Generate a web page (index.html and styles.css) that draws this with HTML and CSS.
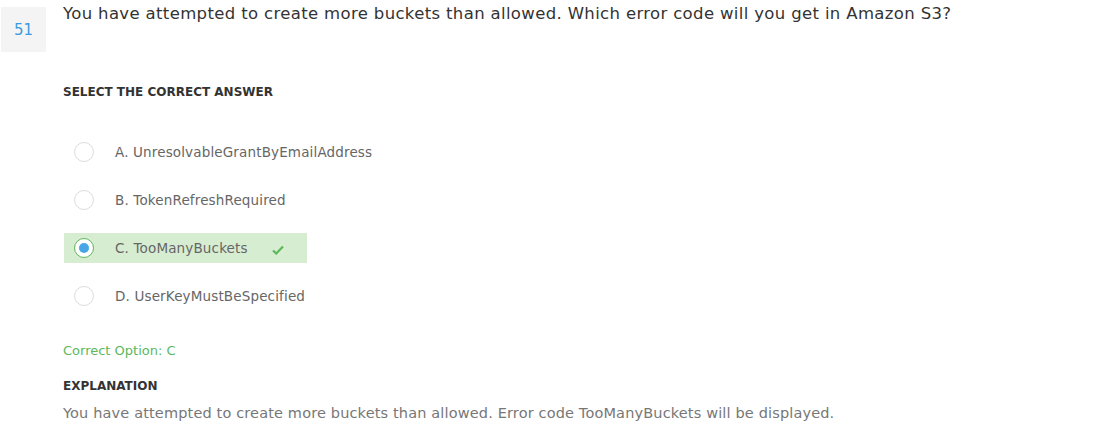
FILE: index.html
```html
<!DOCTYPE html>
<html>
<head>
<meta charset="utf-8">
<link rel="stylesheet" href="styles.css">
</head>
<body>
<div class="question">
  <div class="num">51</div>
  <div class="content">
    <div class="qtext">You have attempted to create more buckets than allowed. Which error code will you get in Amazon S3?</div>
    <div class="label">SELECT THE CORRECT ANSWER</div>
    <ul class="options">
      <li class="option"><span class="radio"></span><span class="otext">A. UnresolvableGrantByEmailAddress</span></li>
      <li class="option"><span class="radio"></span><span class="otext">B. TokenRefreshRequired</span></li>
      <li class="option correct"><span class="radio checked"></span><span class="otext">C. TooManyBuckets</span>
        <svg class="check" width="12" height="10" viewBox="0 0 12 10"><path d="M1 5.5 L4.2 8.5 L11 1.5" fill="none" stroke="#5cb85c" stroke-width="2.2"/></svg>
      </li>
      <li class="option"><span class="radio"></span><span class="otext">D. UserKeyMustBeSpecified</span></li>
    </ul>
    <div class="correct-opt">Correct Option: C</div>
    <div class="label expl-label">EXPLANATION</div>
    <div class="expl">You have attempted to create more buckets than allowed. Error code TooManyBuckets will be displayed.</div>
  </div>
</div>
</body>
</html>
```
FILE: styles.css
```css
* { box-sizing: border-box; }
body {
  margin: 0;
  background: #fff;
  font-family: "DejaVu Sans", sans-serif;
  color: #333;
}
.question {
  display: flex;
  padding: 7px 0 0 1px;
}
.num {
  width: 45px;
  height: 45px;
  background: #f4f4f4;
  color: #3d9be0;
  font-size: 15px;
  display: flex;
  align-items: center;
  justify-content: center;
  flex-shrink: 0;
}
.content {
  margin-left: 17px;
}
.qtext {
  font-size: 16.5px;
  letter-spacing: 0.35px;
  line-height: 20px;
  margin-top: -3px;
  color: #333;
  white-space: nowrap;
}
.label {
  font-size: 12px;
  font-weight: bold;
  color: #333;
  margin-top: 61px;
}
.options {
  list-style: none;
  margin: 38px 0 0 0;
  padding: 0;
}
.option {
  display: flex;
  align-items: center;
  height: 30px;
  width: 243px;
  margin-left: 1px;
  margin-bottom: 18px;
  padding-left: 10px;
  white-space: nowrap;
}
.radio {
  width: 20px;
  height: 20px;
  border-radius: 50%;
  border: 1px solid #dcdcdc;
  background: #fff;
  flex-shrink: 0;
  display: flex;
  align-items: center;
  justify-content: center;
}
.radio.checked {
  border: 1.5px solid #5cb85c;
}
.radio.checked::after {
  content: "";
  width: 10px;
  height: 10px;
  border-radius: 50%;
  background: #48a6e6;
}
.otext {
  margin-left: 21px;
  font-size: 13.5px;
  letter-spacing: 0.15px;
  color: #666;
}
.correct {
  background: #d6edd2;
}
.check {
  margin-left: 24px;
  margin-top: 4px;
}
.correct-opt {
  margin-top: 32px;
  font-size: 13px;
  color: #5cb85c;
}
.expl-label {
  margin-top: 21px;
}
.expl {
  margin-top: 12px;
  font-size: 14.5px;
  letter-spacing: 0.15px;
  color: #777;
}
```
